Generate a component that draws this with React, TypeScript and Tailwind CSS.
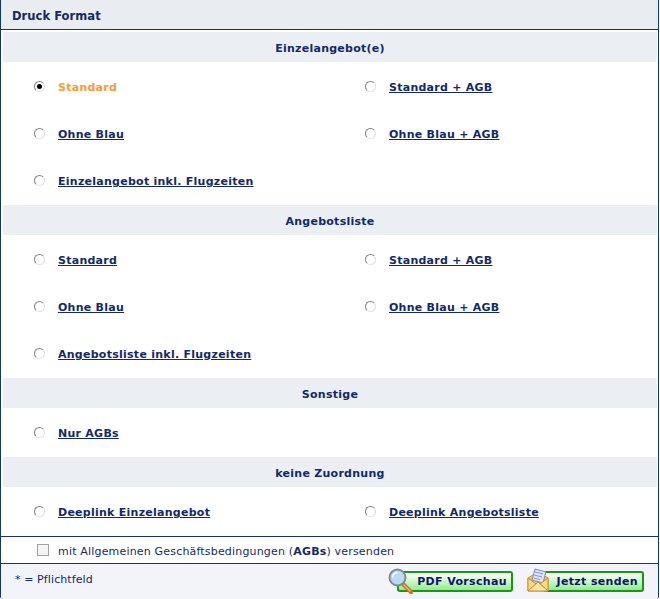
import React from "react";

const navy = "text-[#12296b]";

const Radio = ({ checked }: { checked?: boolean }) => (
  <span className="relative block w-[11px] h-[11px] shrink-0 rounded-full bg-white border border-t-[#808080] border-l-[#808080] border-r-[#dcdcdc] border-b-[#e4e4e4]">
    {checked && <span className="absolute left-[2px] top-[2px] w-[5px] h-[5px] rounded-full bg-black" />}
  </span>
);

const Option = ({ label, checked }: { label: string; checked?: boolean }) => (
  <div className="flex items-center h-[47px] pl-[31px]">
    <Radio checked={checked} />
    <div className="pt-[2px] ml-[13px]">
      <a className={checked ? "font-bold text-[#ff9933]" : `font-bold underline ${navy}`}>{label}</a>
    </div>
  </div>
);

const Section = ({ title, rows }: { title: string; rows: { label: string; checked?: boolean }[] }) => (
  <div>
    <div className={`h-[30px] pt-[2px] flex items-center justify-center bg-[#ebeef3] font-bold ${navy}`}>{title}</div>
    <div className="grid grid-cols-[331px_1fr] py-[1px]">
      {rows.map((r) => (
        <Option key={r.label} label={r.label} checked={r.checked} />
      ))}
    </div>
  </div>
);

const Magnifier = () => (
  <svg width="26" height="26" viewBox="0 0 26 26" className="absolute left-[-11px] top-[-5px]">
    <path d="M15 16 L23 24" stroke="#d9662a" strokeWidth="4" strokeLinecap="round" />
    <path d="M16 17 L22 23" stroke="#f6b26b" strokeWidth="1.500" strokeLinecap="round" />
    <circle cx="9.500" cy="9.500" r="8" fill="#bcd8f5" stroke="#7d8a8f" strokeWidth="2" />
    <path d="M4.500 9.500 A5 5 0 0 1 9.500 4.500" stroke="#ffffff" strokeWidth="1.500" fill="none" />
  </svg>
);

const Envelope = () => (
  <svg width="22" height="24" viewBox="0 0 22 24" className="absolute left-[-18px] top-[-5px]">
    <path d="M1 10 L11 4 L21 10 L21 23 L1 23 Z" fill="#f3c568" stroke="#c98f2e" />
    <path d="M8 1 L19 4 L16 15 L5 12 Z" fill="#dfe3f5" stroke="#7f88c0" />
    <path d="M8 4 L16 6 M7 7 L15 9 M6.500 10 L13 11.500" stroke="#8d96c8" />
    <path d="M1 10 L9 16 L1 23 Z M21 10 L13 16 L21 23 Z" fill="#f8d98a" stroke="#c98f2e" />
    <path d="M1 23 L11 14 L21 23 Z" fill="#fbe3a0" stroke="#c98f2e" />
  </svg>
);

const GreenButton = ({ label, width, icon }: { label: string; width: string; icon: React.ReactNode }) => (
  <button className={`relative flex items-center justify-end h-[21px] ${width} pr-[4px] rounded-[3px] border-2 border-[#169a12] bg-gradient-to-b from-white to-[#8cee88] font-bold tracking-[0.35px] text-[#12126b]`}>
    {icon}
    {label}
  </button>
);

export default function App() {
  return (
    <div className="bg-white w-[660px] h-[599px] overflow-hidden">
      <div className="w-[659px] h-[599px] rounded-b-[3px] overflow-hidden border-l border-r border-[#12356b] text-[11px] leading-[13px] font-['DejaVu_Sans',Verdana,sans-serif] tracking-[0.26px]">
        <div className={`h-[30px] pt-[3px] flex items-center pl-[11px] bg-[#e9edf2] border-b border-[#12356b] text-[11.5px] tracking-[0.05px] font-bold ${navy}`}>
          Druck Format
        </div>
        <div className="pl-[2px] pr-[1px] pt-[2px]">
          <Section
            title="Einzelangebot(e)"
            rows={[
              { label: "Standard", checked: true },
              { label: "Standard + AGB" },
              { label: "Ohne Blau" },
              { label: "Ohne Blau + AGB" },
              { label: "Einzelangebot inkl. Flugzeiten" },
            ]}
          />
          <Section
            title="Angebotsliste"
            rows={[
              { label: "Standard" },
              { label: "Standard + AGB" },
              { label: "Ohne Blau" },
              { label: "Ohne Blau + AGB" },
              { label: "Angebotsliste inkl. Flugzeiten" },
            ]}
          />
          <Section title="Sonstige" rows={[{ label: "Nur AGBs" }]} />
          <Section
            title="keine Zuordnung"
            rows={[{ label: "Deeplink Einzelangebot" }, { label: "Deeplink Angebotsliste" }]}
          />
        </div>
        <div className={`h-[28px] flex items-center pl-[36px] border-t border-b border-[#12356b] tracking-[0.18px] ${navy}`}>
          <span className="block w-[12px] h-[12px] mr-[9px] border border-[#a0a0a0] bg-[#f4f4f4]" />
          <div className="pt-[2px]">
            mit Allgemeinen Geschäftsbedingungen (<b>AGBs</b>) versenden
          </div>
        </div>
        <div className={`h-[36px] flex items-start justify-between pt-[7px] pl-[14px] pr-[14px] bg-[#f3f4fa] tracking-[0.1px] ${navy}`}>
          <div className="pt-[2px]">* = Pflichtfeld</div>
          <div className="flex gap-[30px]">
            <GreenButton label="PDF Vorschau" width="w-[116px]" icon={<Magnifier />} />
            <GreenButton label="Jetzt senden" width="w-[101px]" icon={<Envelope />} />
          </div>
        </div>
      </div>
    </div>
  );
}
